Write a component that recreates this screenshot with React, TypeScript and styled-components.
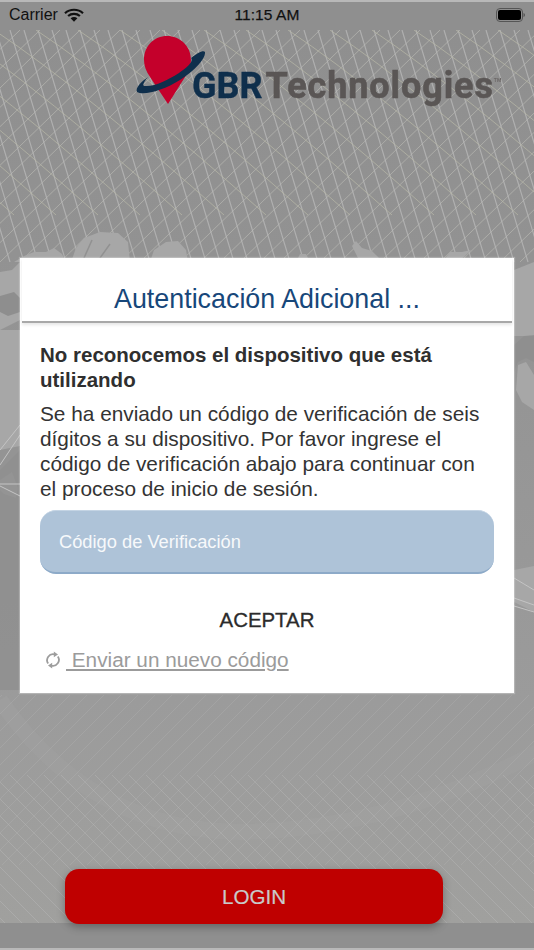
import React from "react";
import styled, { createGlobalStyle } from "styled-components";

const GlobalStyle = createGlobalStyle`
  html, body {
    margin: 0;
    padding: 0;
    background: #8f8f8f;
  }
  * {
    box-sizing: border-box;
  }
`;

// background mesh, coordinates are page pixels
const range = (from: number, to: number, step: number) =>
  Array.from({ length: Math.floor((to - from) / step) + 1 }, (_, i) => from + i * step);

const topForward = range(-100, 900, 20).map((x) => `M${x} 30L${x - 240} 262`).join("");
const topSteep = range(-60, 640, 14).map((x) => `M${x} 30L${x + 70} 262`).join("");
const topArcs = range(-300, 640, 42).map((x) => `M${x} 30Q${x + 90} 90 ${x + 230} 215`).join("");
const bottomForward = range(-100, 1500, 17).map((x) => `M${x} 695L${x - 170} 865`).join("");
const bottomBack = range(-500, 640, 17).map((x) => `M${x} 775L${x + 150} 925`).join("");

const BackgroundMesh = () => (
  <MeshSvg viewBox="0 30 534 893" preserveAspectRatio="none">
    <defs>
      <linearGradient id="bg" x1="0" y1="30" x2="0" y2="923" gradientUnits="userSpaceOnUse">
        <stop offset="0" stopColor="#8f8f8f" />
        <stop offset="0.25" stopColor="#929292" />
        <stop offset="0.75" stopColor="#9b9b9b" />
        <stop offset="1" stopColor="#a0a09e" />
      </linearGradient>
    </defs>
    <rect x="0" y="30" width="534" height="893" fill="url(#bg)" />

    <path d="M0 700Q90 830 240 832Q400 830 560 740" fill="none" stroke="#a5a5a5" strokeWidth="16" opacity="0.28" />

    <path d={topForward} fill="none" stroke="#b6b6b0" strokeWidth="1" opacity="0.75" />
    <path d={topSteep} fill="none" stroke="#bababa" strokeWidth="1.2" opacity="0.75" />
    <path d={topArcs} fill="none" stroke="#b9b9a8" strokeWidth="1" opacity="0.7" />
    <path d={bottomForward} fill="none" stroke="#b4b4b4" strokeWidth="1" opacity="0.32" />
    <path d={bottomBack} fill="none" stroke="#bdbdbd" strokeWidth="1" opacity="0.38" />

    {/* land around the dialog */}
    <g fill="#a7a7a7">
      <path d="M14 262L24 256L34 252L46 252L54 248L62 254L66 262Z" />
      <path d="M71 262L76 248L84 238L100 232L118 233L128 242L130 262Z" />
      <path d="M150 262L154 250L166 242L178 241L186 250L188 262Z" />
      <path d="M352 246L356 241L362 248L372 251L379 258L372 262L358 258Z" />
      <path d="M296 262L300 254L306 254L310 262Z" />
      <path d="M444 260L450 252L462 252L471 250L464 257L456 262Z" />
      <path d="M0 272L12 270L20 262V320L0 330Z" />
      <path d="M0 330H20V450L0 470Z" />
      <path d="M514 270L534 262V335L524 336L514 345Z" />
      <path d="M518 365L526 362L534 375V410L522 402L516 390Z" />
      <path d="M514 570L534 566V612L514 602Z" />
      <path d="M0 480L12 472L18 488L16 498L4 494L0 490Z" />
    </g>
    <g fill="#8e8e8e">
      <path d="M0 296L14 292L20 298V312L8 316L0 312Z" />
      <path d="M0 450L20 446V690H0Z" opacity="0.75" />
      <path d="M514 336H534V362L526 358L518 362L514 372Z" opacity="0.75" />
    </g>
    <path d="M84 258L92 240M100 258L110 244" fill="none" stroke="#919191" strokeWidth="1.5" />
    <path d="M0 450L20 425M0 465L20 435M0 484H20M0 486L20 496" fill="none" stroke="#c4c4c4" strokeWidth="1" />
    <path d="M514 578L534 590M514 598L534 605M514 606L534 612" fill="none" stroke="#c4c4c4" strokeWidth="1" />
  </MeshSvg>
);

const WifiIcon = () => (
  <svg width="20" height="14" viewBox="0 0 20 14">
    <path d="M1 5.2C5.9.6 14.1.6 19 5.2" fill="none" stroke="#111" strokeWidth="2.2" />
    <path d="M4.1 8C7.3 5.1 12.7 5.1 15.9 8" fill="none" stroke="#111" strokeWidth="2.2" />
    <path d="M6.6 10.3L10 13.8L13.4 10.3C11.4 8.7 8.6 8.7 6.6 10.3Z" fill="#111" />
  </svg>
);

const BatteryIcon = () => (
  <svg width="29" height="14" viewBox="0 0 29 14">
    <rect x="0.5" y="0.5" width="26" height="13" rx="3.5" fill="none" stroke="#555" />
    <rect x="2" y="2" width="23" height="10" rx="2" fill="#000" />
    <path d="M27.5 5V9C28.3 8.7 29 7.9 29 7S28.3 5.3 27.5 5Z" fill="#555" />
  </svg>
);

const LogoMark = () => (
  <MarkSvg width="72" height="70" viewBox="0 0 72 70">
    <path
      d="M31 0C44 0 55 10 55 24C55 30 53 35 49 41L32 68L14 41C10 35 8 30 8 24C8 10 18 0 31 0Z"
      fill="#c4002b"
    />
    <path
      d="M55 22C62 17 67 14 69 16C70 22 60 34 44 44C28 54 8 60 1 56C-1 52 5 46 12 41C7 47 6 50 9 50C18 51 32 44 43 37C52 31 58 25 55 22Z"
      fill="#0f2f4c"
    />
  </MarkSvg>
);

const SyncIcon = () => (
  <svg width="16" height="18" viewBox="0 0 16 18">
    <path d="M3.2 12.6A6 6 0 0 1 9.8 3.4" fill="none" stroke="#9d9d9d" strokeWidth="1.8" />
    <path d="M12.8 5.4A6 6 0 0 1 6.2 14.6" fill="none" stroke="#9d9d9d" strokeWidth="1.8" />
    <path d="M8.8 0.4L13 3.6L8.8 6.2Z" fill="#9d9d9d" />
    <path d="M7.2 11.8L3 14.4L7.2 17.6Z" fill="#9d9d9d" />
  </svg>
);

export default function App() {
  return (
    <Screen>
      <GlobalStyle />
      <StatusBar>
        <Carrier>
          Carrier
          <WifiIcon />
        </Carrier>
        <Clock>11:15 AM</Clock>
        <BatteryIcon />
      </StatusBar>
      <Stage>
        <BackgroundMesh />
        <Logo>
          <LogoMark />
          <Brand>GBR</Brand>
          <BrandRest>Technologies</BrandRest>
          <Trademark>TM</Trademark>
        </Logo>
        <Dialog>
          <DialogHeader>
            <DialogTitle>Autenticación Adicional ...</DialogTitle>
          </DialogHeader>
          <DialogBody>
            <Heading>No reconocemos el dispositivo que está utilizando</Heading>
            <Message>
              Se ha enviado un código de verificación de seis dígitos a su dispositivo. Por favor
              ingrese el código de verificación abajo para continuar con el proceso de inicio de
              sesión.
            </Message>
            <CodeInput placeholder="Código de Verificación" />
            <AcceptButton>ACEPTAR</AcceptButton>
            <ResendRow>
              <SyncIcon />
              <ResendLink>&nbsp;Enviar un nuevo código</ResendLink>
            </ResendRow>
          </DialogBody>
        </Dialog>
        <LoginButton>LOGIN</LoginButton>
      </Stage>
      <BottomBar />
    </Screen>
  );
}

const Screen = styled.div`
  display: flex;
  flex-direction: column;
  width: 534px;
  height: 950px;
  overflow: hidden;
  font-family: "Liberation Sans", Arial, sans-serif;
`;

const StatusBar = styled.div`
  display: grid;
  grid-template-columns: 1fr auto 1fr;
  align-items: center;
  justify-items: start;
  height: 30px;
  padding: 0 9px 2px 9px;
  background: #8f8f8f;
  border-top: 2px solid #b8b8b8;
  color: #111;
  font-size: 16px;

  > svg {
    justify-self: end;
  }
`;

const Carrier = styled.div`
  display: flex;
  align-items: center;
  gap: 6px;
`;

const Clock = styled.div`
  font-weight: 500;
  font-size: 15.5px;
  letter-spacing: 0.1px;
  -webkit-text-stroke: 0.25px #111;
`;

const Stage = styled.div`
  position: relative;
  z-index: 1;
  flex: 1;
  display: flex;
  flex-direction: column;
  align-items: flex-start;
  padding-top: 6px;
`;

const MeshSvg = styled.svg`
  position: absolute;
  inset: 0;
  width: 100%;
  height: 100%;
`;

const Logo = styled.div`
  position: relative;
  display: flex;
  align-items: baseline;
  height: 70px;
  margin-left: 136px;
  font-family: Roboto, "Liberation Sans", sans-serif;
  font-weight: 700;
  font-size: 36px;
  filter: blur(0.4px);
`;

const MarkSvg = styled.svg`
  align-self: flex-start;
  margin-right: -16px;
`;

const Brand = styled.span`
  color: #0f2f4c;
  line-height: 100px;
  -webkit-text-stroke: 0.4px #0f2f4c;
`;

const BrandRest = styled.span`
  margin-left: 3px;
  color: #5a5655;
  line-height: 100px;
  letter-spacing: 0.9px;
  -webkit-text-stroke: 0.6px #5a5655;
`;

const Trademark = styled.span`
  align-self: flex-start;
  margin-top: 41px;
  color: #6d6968;
  font-size: 5px;
`;

const Dialog = styled.div`
  position: relative;
  align-self: stretch;
  margin: 152px 20px 0;
  height: 435px;
  background: #fff;
  box-shadow: 0 0 1px 1px rgba(255, 255, 255, 0.25);
`;

const DialogHeader = styled.div`
  display: flex;
  align-items: flex-end;
  justify-content: center;
  height: 65px;
  margin: 0 2px;
  padding-bottom: 7px;
  border-bottom: 2px solid #a8a8a8;
  box-shadow: 0 2px 3px rgba(0, 0, 0, 0.1);
`;

const DialogTitle = styled.h1`
  margin: 0;
  color: #17477a;
  font-size: 26.85px;
  font-weight: 400;
  line-height: 30px;
`;

const DialogBody = styled.div`
  display: flex;
  flex-direction: column;
  padding: 19px 20px 0;
`;

const Heading = styled.h2`
  margin: 0 0 9px;
  color: #2f2f2f;
  font-size: 20.5px;
  font-weight: 700;
  line-height: 25px;
`;

const Message = styled.p`
  margin: 0 0 9px;
  color: #333;
  font-size: 20.8px;
  line-height: 25px;
`;

const CodeInput = styled.input`
  width: 100%;
  height: 64px;
  padding: 0 19px;
  border: 0;
  border-top: 1px solid #c4d4e4;
  border-bottom: 2px solid #8daac8;
  border-radius: 16px;
  outline: none;
  background: #aec3d8;
  color: #fff;
  font-family: inherit;
  font-size: 18.3px;

  &::placeholder {
    color: #f7f9fb;
    opacity: 1;
  }
`;

const AcceptButton = styled.button`
  align-self: center;
  margin-top: 34px;
  padding: 0;
  border: 0;
  background: none;
  color: #2b2b2b;
  font-family: inherit;
  font-size: 20.4px;
  line-height: 24px;
  -webkit-text-stroke: 0.3px #2b2b2b;
`;

const ResendRow = styled.div`
  display: flex;
  align-items: center;
  gap: 5px;
  margin-top: 16px;
  padding-left: 5px;
  line-height: 24px;
`;

const ResendLink = styled.a`
  color: #9b9b9b;
  font-size: 20.75px;
  text-decoration: underline;
`;

const LoginButton = styled.button`
  position: relative;
  align-self: flex-start;
  width: 378px;
  height: 55px;
  margin: auto 0 -1px 65px;
  border: 0;
  border-radius: 14px;
  background: #bf0000;
  box-shadow: 0 3px 8px rgba(0, 0, 0, 0.3);
  color: #c9c9c9;
  font-family: inherit;
  font-size: 20.6px;
  -webkit-text-stroke: 0.2px #c9c9c9;
`;

const BottomBar = styled.div`
  height: 27px;
  background: #8f8f8f;
  border-bottom: 2px solid #b8b8b8;
`;
